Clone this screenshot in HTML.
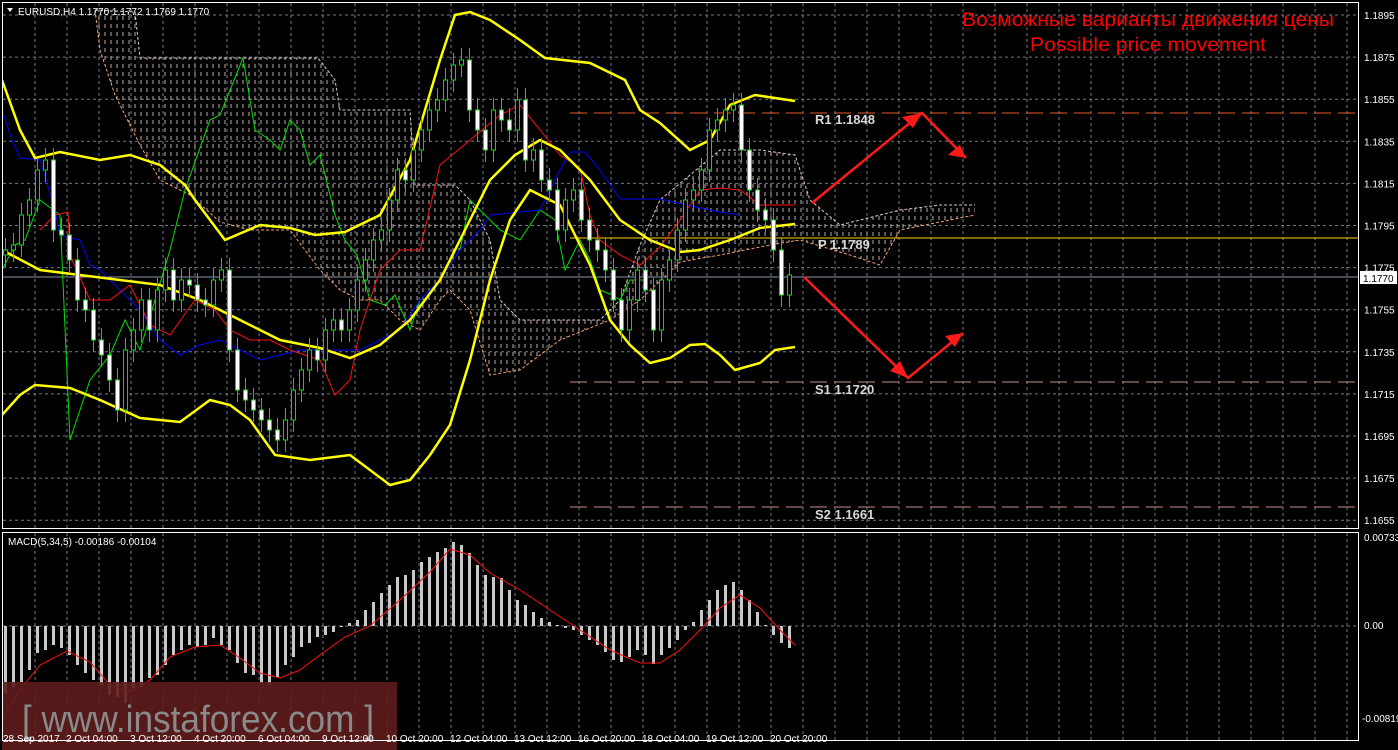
<!DOCTYPE html>
<html><head><meta charset="utf-8"><style>
html,body{margin:0;padding:0;background:#000;width:1398px;height:750px;overflow:hidden}
svg{display:block}
text{font-family:"Liberation Sans",sans-serif}
</style></head><body>
<svg id="s" width="1398" height="750" viewBox="0 0 1398 750" xmlns="http://www.w3.org/2000/svg">
<defs>
<pattern id="cw" width="6" height="8" patternUnits="userSpaceOnUse">
<line x1="3" y1="0" x2="3" y2="4" stroke="#e8d8d0" stroke-width="1"/>
</pattern>
<clipPath id="mc"><rect x="3" y="3" width="1355" height="525"/></clipPath>
<clipPath id="dc"><rect x="3" y="533" width="1355" height="207"/></clipPath>
</defs>
<rect width="1398" height="750" fill="#000"/>
<g id="grid" stroke="#6c7a8a" stroke-width="1" stroke-dasharray="3,3"></g>
<g clip-path="url(#mc)">
<polygon fill="url(#cw)" opacity="0.8" points="95,10 135,12 140,58 318,58 335,80 340,110 410,110 415,185 455,185 470,200 490,240 500,300 520,320 600,320 620,300 640,245 660,200 690,175 720,150 760,150 795,155 810,200 840,225 880,215 900,210 940,205 975,205 975,215 900,230 880,265 850,255 800,240 770,245 720,255 680,262 640,300 610,320 560,340 520,370 490,375 470,310 450,290 440,300 420,330 400,320 380,300 360,300 340,290 320,270 290,230 250,230 220,222 190,195 160,180 140,145 115,95 100,50"/>
<polyline fill="none" stroke="#f4a070" stroke-width="1" stroke-dasharray="3,2" points="95,10 100,50 115,95 140,145 160,180 190,195 220,222 250,230 290,230 320,270 340,290 360,300 380,300 400,320 420,330 440,300 450,290 470,310 490,375 520,370 560,340 610,320 640,300 680,262 720,255 770,245 800,240 850,255 880,265 900,230 975,215"/>
<polyline fill="none" stroke="#e0c8d0" stroke-width="1" stroke-dasharray="3,2" points="95,10 135,12 140,58 318,58 335,80 340,110 410,110 415,185 455,185 470,200 490,240 500,300 520,320 600,320 620,300 640,245 660,200 690,175 720,150 760,150 795,155 810,200 840,225 880,215 900,210 940,205 975,205"/>
<line x1="570" y1="113" x2="1358" y2="113" stroke="#e85a2a" stroke-dasharray="17,7"/>
<line x1="570" y1="238" x2="1358" y2="238" stroke="#ffd000"/>
<line x1="570" y1="382" x2="1358" y2="382" stroke="#c89088" stroke-dasharray="17,7"/>
<line x1="570" y1="507" x2="1358" y2="507" stroke="#c89088" stroke-dasharray="17,7"/>
<line x1="3" y1="277" x2="1358" y2="277" stroke="#8a96a4"/>
<polyline fill="none" stroke="#00e000" stroke-width="1" points="2,270 15,245 25,240 40,200 60,215 70,440 90,380 110,355 125,320 140,350 170,250 185,190 210,120 220,115 243,58 255,130 270,140 280,150 290,120 300,130 310,165 320,155 335,215 345,240 357,255 370,300 385,305 395,295 410,330 420,300 440,280 460,250 470,200 480,210 500,230 520,240 540,210 555,220 565,270 580,240 590,260 600,290 612,295 620,300 630,280 642,280"/>
<polyline fill="none" stroke="#0000ff" stroke-width="1" points="2,110 12,140 20,158 40,160 55,210 60,235 80,240 90,265 100,270 120,290 140,310 160,340 180,355 200,345 220,340 240,350 260,360 280,355 300,350 330,350 360,350 380,340 400,330 420,300 440,280 460,250 480,230 490,215 520,212 540,210 560,170 570,152 585,152 600,170 620,199 660,199 700,208 720,212 740,215"/>
<polyline fill="none" stroke="#ff1010" stroke-width="1" points="40,230 55,215 68,212 70,255 90,300 110,300 130,285 150,325 170,335 195,300 215,310 230,330 250,340 270,340 290,350 320,360 335,395 350,380 360,330 380,270 400,250 420,250 440,165 470,140 500,115 520,105 540,130 560,155 580,168 590,215 600,240 620,255 640,265 660,247 680,220 700,190 720,188 740,190 760,205 780,205 795,205"/>
<g fill="none" stroke="#ffff00" stroke-width="2.5">
<polyline points="2,80 20,130 35,158 60,152 100,160 130,155 160,165 185,185 195,200 225,240 260,225 290,228 315,235 345,232 380,215 410,160 440,60 455,15 470,12 490,20 520,40 545,58 590,63 625,80 640,110 660,123 690,150 710,140 730,105 755,95 795,101"/>
<polyline points="2,250 40,270 80,275 120,280 160,285 200,300 240,320 280,340 320,348 350,358 380,345 410,320 440,280 460,240 490,180 515,155 540,140 560,150 590,180 620,220 650,240 680,252 700,250 730,240 760,228 795,224"/>
<polyline points="2,415 20,395 35,385 70,388 100,400 140,418 180,422 210,400 230,405 250,420 275,455 310,460 350,455 370,470 390,485 410,480 430,455 450,425 470,360 490,280 510,220 530,190 560,205 590,265 610,320 630,345 650,363 670,358 690,345 705,344 720,355 735,370 760,363 775,350 795,347"/>
</g>
<g id="candles"></g>
<g stroke="#ff1a1a" stroke-width="2.5" fill="none">
<polyline points="812,203 922,113 966,158"/>
<polyline points="804,277 908,378 963,333"/>
</g>
<g fill="#ff1a1a">
<polygon points="922,113 902,117 913,128"/>
<polygon points="966,158 948,155 960,145"/>
<polygon points="908,378 890,371 900,361"/>
<polygon points="963,333 945,336 955,347"/>
</g>
<g font-family="Liberation Mono,monospace" font-size="13" font-weight="bold" fill="#d8d8d8">
<text x="815" y="124">R1 1.1848</text>
<text x="818" y="249">P  1.1789</text>
<text x="815" y="394">S1 1.1720</text>
<text x="815" y="519">S2 1.1661</text>
</g>
</g>
<g clip-path="url(#dc)">
<line x1="3" y1="626" x2="1358" y2="626" stroke="#6c7a8a" stroke-dasharray="3,3"/>
<g id="macd"></g>
<polyline fill="none" stroke="#ff1010" stroke-width="1" points="2,720 20,690 40,665 67,651 90,662 110,685 130,692 150,680 170,657 195,647 220,645 240,658 260,673 280,678 300,670 320,655 345,637 370,626 400,600 430,572 450,549 470,555 490,573 520,590 550,610 580,630 610,650 640,663 660,663 680,650 700,630 720,608 740,595 760,608 780,630 795,645"/>
</g>
<rect x="2" y="682" width="395" height="68" fill="#5e1c1c" opacity="0.9"/>
<text x="22" y="732" font-size="38" fill="#8a8a8a" textLength="352" lengthAdjust="spacingAndGlyphs">[ www.instaforex.com ]</text>
<rect x="2.5" y="2.5" width="1356" height="526" fill="none" stroke="#fff"/>
<rect x="2.5" y="532.5" width="1356" height="208" fill="none" stroke="#fff"/>
<text x="1148" y="26" font-size="19" fill="#ff0000" text-anchor="middle" textLength="372" lengthAdjust="spacingAndGlyphs">Возможные варианты движения цены</text>
<text x="1148" y="51" font-size="19" fill="#ff0000" text-anchor="middle" textLength="236" lengthAdjust="spacingAndGlyphs">Possible price movement</text>
<polygon points="7,8 13,8 10,12" fill="#fff"/>
<text x="18" y="15" font-size="10" fill="#fff">EURUSD,H4  1.1770 1.1772 1.1769 1.1770</text>
<text x="8" y="545" font-size="10" fill="#fff">MACD(5,34,5) -0.00186 -0.00104</text>
<g id="axis" font-size="10" fill="#fff"></g>
<rect x="1360" y="271" width="37" height="13" fill="#fff"/>
<text x="1363" y="282" font-size="10" fill="#000">1.1770</text>
<text x="1364" y="541" font-size="10" fill="#fff">0.00733</text>
<text x="1364" y="629" font-size="10" fill="#fff">0.00</text>
<text x="1362" y="722" font-size="10" fill="#fff">-0.00819</text>
<g font-size="10" fill="#fff">
<text x="3" y="742">28 Sep 2017</text><text x="66" y="742">2 Oct 04:00</text><text x="130" y="742">3 Oct 12:00</text><text x="194" y="742">4 Oct 20:00</text><text x="258" y="742">6 Oct 04:00</text><text x="322" y="742">9 Oct 12:00</text><text x="386" y="742">10 Oct 20:00</text><text x="450" y="742">12 Oct 04:00</text><text x="514" y="742">13 Oct 12:00</text><text x="578" y="742">16 Oct 20:00</text><text x="642" y="742">18 Oct 04:00</text><text x="706" y="742">19 Oct 12:00</text><text x="770" y="742">20 Oct 20:00</text>
</g>
</svg>
<script>
(function(){
var NS="http://www.w3.org/2000/svg";
function el(p,t,a){var e=document.createElementNS(NS,t);for(var k in a)e.setAttribute(k,a[k]);p.appendChild(e);return e;}
var g=document.getElementById("grid");
for(var x=35;x<1358;x+=32){el(g,"line",{x1:x,y1:3,x2:x,y2:528});el(g,"line",{x1:x,y1:533,x2:x,y2:740});}
var ax=document.getElementById("axis");
var labs=["1.1895","1.1875","1.1855","1.1835","1.1815","1.1795","1.1775","1.1755","1.1735","1.1715","1.1695","1.1675","1.1655"];
for(var i=0;i<13;i++){var yy=15+i*42.1;el(g,"line",{x1:3,y1:yy,x2:1358,y2:yy});var t=el(ax,"text",{x:1364,y:yy+4});t.textContent=labs[i];}
var cl=[250,245,215,200,170,160,230,235,260,300,310,340,355,380,410,350,330,300,330,290,270,300,280,285,300,305,280,270,350,390,400,410,420,430,440,420,390,370,350,360,330,320,330,310,280,260,240,230,200,170,180,150,130,110,100,80,65,60,110,130,150,110,120,130,100,160,150,180,190,230,200,190,220,240,250,270,300,330,300,270,290,330,280,260,230,200,190,170,130,120,110,105,150,190,210,220,250,295,275];
var cg=document.getElementById("candles");var prev=255;
for(var i=0;i<cl.length;i++){var cx=5+i*8,c=cl[i],o=prev;var hi=Math.min(o,c),lo=Math.max(o,c);if(lo-hi<3)lo=hi+3;
el(cg,"line",{x1:cx+0.5,y1:hi-12,x2:cx+0.5,y2:lo+12,stroke:"#00e000"});
el(cg,"rect",{x:cx-1.5,y:hi,width:4,height:lo-hi,fill:(c>o?"#fff":"#000"),stroke:"#00e000"});
prev=c;}
var mv=[693,687,682,670,653,650,645,648,655,665,673,680,685,695,697,703,688,687,678,675,665,655,650,645,647,645,638,645,650,663,673,675,683,685,677,665,657,647,643,637,635,632,627,623,620,610,602,593,585,577,575,570,562,557,552,548,542,545,553,565,575,577,578,590,600,605,612,618,622,625,628,630,635,640,645,652,660,662,657,650,655,664,655,648,640,630,622,610,600,590,585,582,590,600,612,625,635,643,648];
var mg=document.getElementById("macd");
for(var i=0;i<mv.length;i++){var mx=4+i*8,my=mv[i];el(mg,"rect",{x:mx,y:Math.min(my,626),width:3,height:Math.max(1,Math.abs(my-626)),fill:"#c8c8c8"});}
})();
</script>
</body></html>
